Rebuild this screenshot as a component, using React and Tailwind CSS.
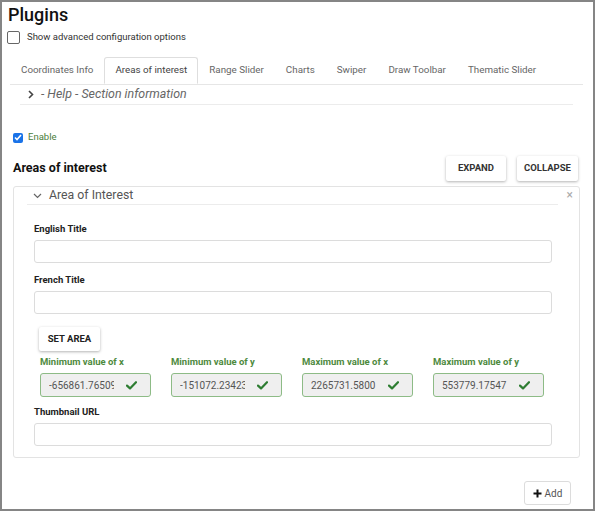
import React from "react";

const tabs = [
  "Coordinates Info",
  "Areas of interest",
  "Range Slider",
  "Charts",
  "Swiper",
  "Draw Toolbar",
  "Thematic Slider",
];

const coords = [
  { label: "Minimum value of x", value: "-656861.76509" },
  { label: "Minimum value of y", value: "-151072.23423" },
  { label: "Maximum value of x", value: "2265731.5800" },
  { label: "Maximum value of y", value: "553779.17547" },
];

function Check() {
  return (
    <svg width="11" height="9" viewBox="0 0 11 9" className="shrink-0">
      <path d="M1 4.6 L4 7.4 L10 1.2" fill="none" stroke="#2e7d32" strokeWidth="2.2" strokeLinecap="round" strokeLinejoin="round" />
    </svg>
  );
}

function Field({ label, className = "" }) {
  return (
    <div className={className}>
      <div className="h-[12px] leading-[12px] text-[9.5px] font-bold text-[#222]">{label}</div>
      <div className="mt-[5px] h-[23px] w-[518px] border border-[#dcdcdc] rounded-[3px] bg-white" />
    </div>
  );
}

export default function App() {
  return (
    <div className="w-[595px] h-[511px] border-2 border-[#858585] bg-white font-['Roboto',sans-serif] text-[#333] overflow-hidden">
      <h1 className="ml-[6px] mt-[2px] h-[22px] leading-[22px] text-[18px] font-medium text-[#111]">Plugins</h1>

      <div className="ml-[5px] mt-[4px] h-[15px] flex items-center">
        <div className="w-[13px] h-[13px] border border-[#666] rounded-[2px] bg-white" />
        <span className="ml-[7px] text-[9.5px] text-[#333] whitespace-nowrap">Show advanced configuration options</span>
      </div>

      <div className="ml-[8px] mt-[12px] w-[573px] flex border-b border-[#e6e6e6]">
        {tabs.map((t, i) => (
          <div
            key={t}
            className={
              i === 1
                ? "h-[27px] px-[10px] flex items-center whitespace-nowrap text-[9.8px] text-[#444] border border-[#dedede] border-b-white rounded-t-[3px] -mb-px bg-white"
                : "h-[27px] px-[11px] flex items-center whitespace-nowrap text-[9.8px] text-[#666]"
            }
          >
            {t}
          </div>
        ))}
      </div>

      <div className="ml-[18px] w-[553px] h-[20px] flex items-center border-b border-[#ececec]">
        <svg width="8" height="9" viewBox="0 0 8 9" className="ml-[7px]">
          <path d="M2 1 L5.5 4.5 L2 8" fill="none" stroke="#444" strokeWidth="1.6" />
        </svg>
        <span className="ml-[6px] text-[12.4px] italic text-[#666] whitespace-nowrap">- Help - Section information</span>
      </div>

      <div className="ml-[11px] mt-[27px] h-[11px] flex items-center">
        <div className="w-[10px] h-[10px] rounded-[2px] bg-[#1a73e8] flex items-center justify-center">
          <svg width="8" height="7" viewBox="0 0 8 7">
            <path d="M1 3.5 L3 5.5 L7 1" fill="none" stroke="white" strokeWidth="1.6" />
          </svg>
        </div>
        <span className="ml-[5px] text-[9.5px] text-[#4a7d3a]">Enable</span>
      </div>

      <div className="ml-[11px] mt-[11px] w-[565px] h-[29px] flex items-center">
        <span className="text-[12.5px] font-bold text-[#111]">Areas of interest</span>
        <div className="ml-auto flex gap-[11px]">
          <button className="w-[60px] h-[25px] text-[9.5px] font-bold text-[#333] bg-white shadow-[0_1px_3px_rgba(0,0,0,0.3)] rounded-[2px]">EXPAND</button>
          <button className="w-[61px] h-[25px] text-[9.5px] font-bold text-[#333] bg-white shadow-[0_1px_3px_rgba(0,0,0,0.3)] rounded-[2px]">COLLAPSE</button>
        </div>
      </div>

      <div className="relative ml-[11px] mt-[3px] w-[567px] h-[272px] border border-[#e3e3e3] rounded-[3px]">
        <div className="ml-[13px] w-[531px] h-[18px] flex items-center border-b border-[#ececec]">
          <svg width="9" height="6" viewBox="0 0 9 6" className="ml-[6px]">
            <path d="M1 1 L4.5 4.5 L8 1" fill="none" stroke="#666" strokeWidth="1.2" />
          </svg>
          <span className="ml-[7px] text-[12.3px] text-[#555]">Area of Interest</span>
        </div>
        <span className="absolute right-[6px] top-[1px] text-[12px] leading-[14px] text-[#aaa]">×</span>

        <div className="pl-[20px]">
          <Field label="English Title" className="mt-[18px]" />
          <Field label="French Title" className="mt-[11px]" />

          <button className="ml-[5px] mt-[13px] w-[61px] h-[24px] text-[9.5px] font-bold text-[#222] bg-white shadow-[0_1px_3px_rgba(0,0,0,0.3)] rounded-[2px]">SET AREA</button>

          <div className="ml-[6px] mt-[5px] grid grid-cols-[111px_111px_111px_111px] gap-x-[20px]">
            {coords.map((c) => (
              <div key={c.label}>
                <div className="h-[12px] leading-[12px] text-[9.5px] font-bold text-[#4e8a3e] whitespace-nowrap">{c.label}</div>
                <div className="mt-[5px] h-[24px] flex items-center border border-[#8dbb86] rounded-[3px] bg-[#efefef] pl-[8px] pr-[13px]">
                  <span className="w-[65px] overflow-hidden whitespace-nowrap text-[10px] text-[#555]">{c.value}</span>
                  <span className="ml-auto"><Check /></span>
                </div>
              </div>
            ))}
          </div>

          <Field label="Thumbnail URL" className="mt-[9px]" />
        </div>
      </div>

      <button className="ml-[522px] mt-[23px] w-[47px] h-[24px] flex items-center justify-center gap-[3px] border border-[#dcdcdc] rounded-[3px] bg-white">
        <svg width="9" height="9" viewBox="0 0 9 9">
          <path d="M4.5 0.5 V8.5 M0.5 4.5 H8.5" stroke="#111" strokeWidth="2" />
        </svg>
        <span className="text-[10px] text-[#555]">Add</span>
      </button>
    </div>
  );
}
